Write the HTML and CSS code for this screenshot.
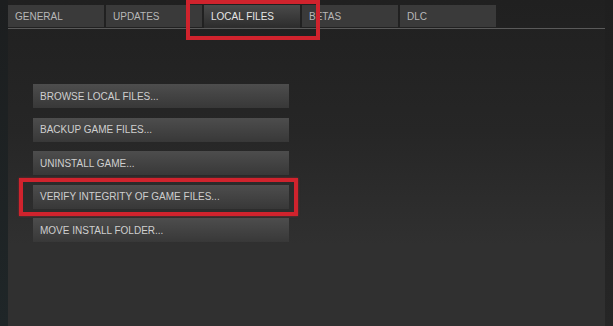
FILE: index.html
```html
<!DOCTYPE html>
<html lang="en">
<head>
  <meta charset="UTF-8">
  <title>Properties - Local Files</title>
  <meta name="viewport" content="width=device-width, initial-scale=1.0">
  <link rel="stylesheet" href="styles.css">
</head>
<body>

  <div class="window">
    <div class="edge left"></div>

    <div class="panel">
      <div class="tabs">
        <div class="tab">GENERAL</div>
        <div class="tab">UPDATES</div>
        <div class="tab active marked">LOCAL FILES</div>
        <div class="tab">BETAS</div>
        <div class="tab">DLC</div>
      </div>

      <div class="actions">
        <button class="action">BROWSE LOCAL FILES...</button>
        <button class="action">BACKUP GAME FILES...</button>
        <button class="action">UNINSTALL GAME...</button>
        <button class="action marked-btn">VERIFY INTEGRITY OF GAME FILES...</button>
        <button class="action">MOVE INSTALL FOLDER...</button>
      </div>
    </div>

    <div class="edge right"></div>
  </div>

</body>
</html>
```

FILE: styles.css
```css
:root {
  --text: #cfcfcf;
  --tab-bg: #3a3a3a;
  --mark: #d0232d;
}

* {
  box-sizing: border-box;
}

body {
  margin: 0;
  font-family: 'Liberation Sans', Arial, sans-serif;
  background: #202020;
  overflow: hidden;
}

.window {
  display: flex;
  height: 326px;
}

.edge {
  flex: 0 0 8px;
}

.edge.left {
  background: linear-gradient(to bottom, #1c1e1f, #1f2628);
}

.edge.right {
  background: linear-gradient(to bottom, #1f1f1f, #262626);
}

.panel {
  flex: 1;
  background: linear-gradient(to bottom, #202020 0%, #262626 40%, #303030 75%, #303030 100%);
}

.tabs {
  display: flex;
  gap: 2px;
  padding-top: 5px;
  border-bottom: 1px solid #5a5a5a;
  height: 29px;
}

.tab {
  position: relative;
  width: 96px;
  height: 22px;
  padding: 6px 0 0 7px;
  font-size: 10px;
  color: #b8b8b8;
  background: var(--tab-bg);
}

.tab.active {
  height: 23px;
  color: #e6e6e6;
  background: linear-gradient(to bottom, #4a4a4a, #2c2c2c);
}

.marked::after {
  content: "";
  position: absolute;
  left: -18px;
  right: -20px;
  top: -5px;
  bottom: -12px;
  border: 4px solid var(--mark);
  z-index: 2;
}

.actions {
  display: flex;
  flex-direction: column;
  align-items: flex-start;
  gap: 9.5px;
  padding: 55px 0 0 25px;
}

.action {
  position: relative;
  width: 256px;
  height: 24px;
  padding: 0 0 0 7px;
  border: none;
  text-align: left;
  font-family: inherit;
  font-size: 10px;
  color: var(--text);
  background: linear-gradient(to bottom, #4d4d4d, #383838);
  cursor: pointer;
}

.action:hover {
  background: linear-gradient(to bottom, #575757, #404040);
}

.marked-btn::after {
  content: "";
  position: absolute;
  left: -14px;
  right: -9px;
  top: -7px;
  bottom: -7px;
  border: 4px solid var(--mark);
  box-shadow: 0 0 2px rgba(208, 35, 45, 0.6);
}
```
